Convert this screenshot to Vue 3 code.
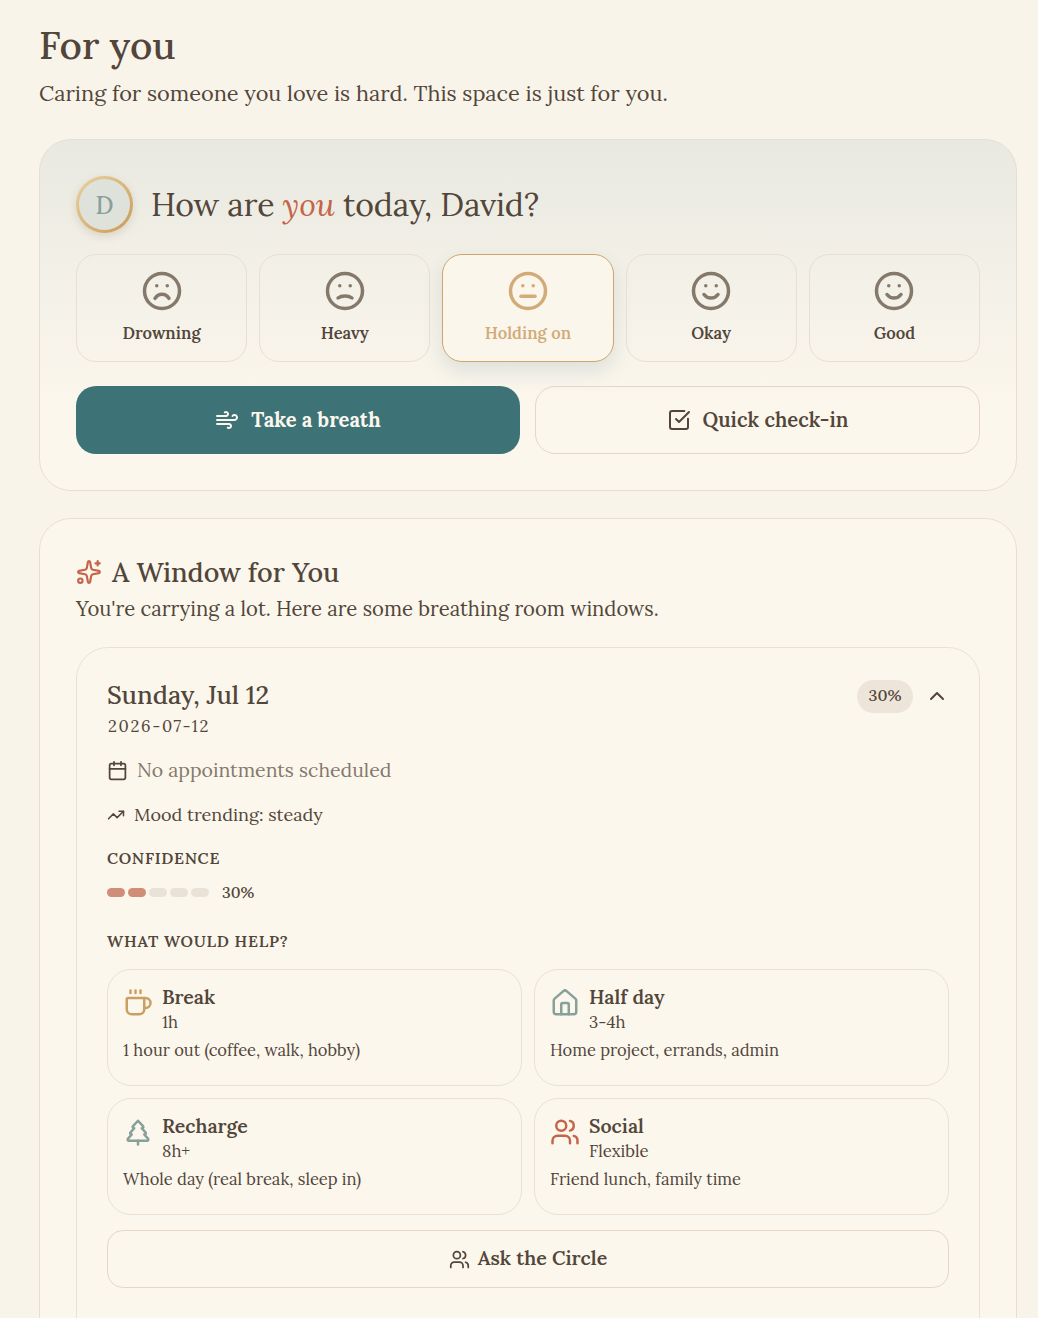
<script setup>
const moods = [
  { label: 'Drowning', mouth: 'M16 16.2s-1.5-2.4-4-2.4-4 2.4-4 2.4' },
  { label: 'Heavy', mouth: 'M16 16s-1.5-1.2-4-1.2-4 1.2-4 1.2' },
  { label: 'Holding on', mouth: 'M8 15h8', active: true },
  { label: 'Okay', mouth: 'M8 14s1.5 2 4 2 4-2 4-2' },
  { label: 'Good', mouth: 'M8 14s1.5 2 4 2 4-2 4-2' }
]
const segments = [true, true, false, false, false]
const options = [
  { title: 'Break', time: '1h', text: '1 hour out (coffee, walk, hobby)', color: '#c9a062', paths: ['M10 2v2', 'M14 2v2', 'M16 8a1 1 0 0 1 1 1v8a4 4 0 0 1-4 4H7a4 4 0 0 1-4-4V9a1 1 0 0 1 1-1h14a4 4 0 1 1 0 8h-1', 'M6 2v2'] },
  { title: 'Half day', time: '3-4h', text: 'Home project, errands, admin', color: '#87a09a', paths: ['M15 21v-8a1 1 0 0 0-1-1h-4a1 1 0 0 0-1 1v8', 'M3 10a2 2 0 0 1 .709-1.528l7-5.999a2 2 0 0 1 2.582 0l7 5.999A2 2 0 0 1 21 10v9a2 2 0 0 1-2 2H5a2 2 0 0 1-2-2z'] },
  { title: 'Recharge', time: '8h+', text: 'Whole day (real break, sleep in)', color: '#87a09a', paths: ['m17 14 3 3.3a1 1 0 0 1-.7 1.7H4.7a1 1 0 0 1-.7-1.7L7 14h-.3a1 1 0 0 1-.7-1.7L9 9h-.2A1 1 0 0 1 8 7.3L12 3l4 4.3a1 1 0 0 1-.8 1.7H15l3 3.3a1 1 0 0 1-.7 1.7H17Z', 'M12 22v-3'] },
  { title: 'Social', time: 'Flexible', text: 'Friend lunch, family time', color: '#c4654a', paths: ['M16 3.128a4 4 0 0 1 0 7.744', 'M16 21v-2a4 4 0 0 0-4-4H6a4 4 0 0 0-4 4v2', 'M22 21v-2a4 4 0 0 0-3-3.87', 'M13 7a4 4 0 1 1-8 0 4 4 0 0 1 8 0'] }
]
</script>

<template>
  <main class="page">
    <h1 class="title">For you</h1>
    <p class="subtitle">Caring for someone you love is hard. This space is just for you.</p>

    <section class="card hero">
      <div class="greeting">
        <div class="avatar">D</div>
        <h2>How are <em>you</em> today, David?</h2>
      </div>
      <div class="moods">
        <button v-for="m in moods" :key="m.label" class="mood" :class="{ active: m.active }">
          <svg class="mood-icon" viewBox="0 0 24 24" fill="none" stroke="currentColor" stroke-width="2" stroke-linecap="round" stroke-linejoin="round">
            <circle cx="12" cy="12" r="10" />
            <path :d="m.mouth" />
            <path d="M9 9h.01" />
            <path d="M15 9h.01" />
          </svg>
          <span>{{ m.label }}</span>
        </button>
      </div>
      <div class="actions">
        <button class="primary">
          <svg class="icon-22" viewBox="0 0 24 24" fill="none" stroke="currentColor" stroke-width="2" stroke-linecap="round" stroke-linejoin="round">
            <path d="M12.8 19.6A2 2 0 1 0 14 16H2" /><path d="M17.5 8a2.5 2.5 0 1 1 2 4H2" /><path d="M9.8 4.4A2 2 0 1 1 11 8H2" />
          </svg>
          <span>Take a breath</span>
        </button>
        <button class="secondary">
          <svg class="icon-22" viewBox="0 0 24 24" fill="none" stroke="currentColor" stroke-width="2" stroke-linecap="round" stroke-linejoin="round">
            <path d="M21 10.656V19a2 2 0 0 1-2 2H5a2 2 0 0 1-2-2V5a2 2 0 0 1 2-2h12.344" /><path d="m9 11 3 3L22 4" />
          </svg>
          <span>Quick check-in</span>
        </button>
      </div>
    </section>

    <section class="card window">
      <div class="window-head">
        <svg class="icon-24 rust" viewBox="0 0 24 24" fill="none" stroke="currentColor" stroke-width="2" stroke-linecap="round" stroke-linejoin="round">
          <path d="M11.017 2.814a1 1 0 0 1 1.966 0l1.051 5.558a2 2 0 0 0 1.594 1.594l5.558 1.051a1 1 0 0 1 0 1.966l-5.558 1.051a2 2 0 0 0-1.594 1.594l-1.051 5.558a1 1 0 0 1-1.966 0l-1.051-5.558a2 2 0 0 0-1.594-1.594l-5.558-1.051a1 1 0 0 1 0-1.966l5.558-1.051a2 2 0 0 0 1.594-1.594z" />
          <path d="M20 2v4" /><path d="M22 4h-4" /><circle cx="4" cy="20" r="2" />
        </svg>
        <h2>A Window for You</h2>
      </div>
      <p class="window-sub">You're carrying a lot. Here are some breathing room windows.</p>

      <div class="day">
        <div class="day-head">
          <div>
            <h3>Sunday, Jul 12</h3>
            <div class="iso">2026-07-12</div>
          </div>
          <div class="day-tools">
            <span class="pill">30%</span>
            <svg class="chev" viewBox="0 0 24 24" fill="none" stroke="currentColor" stroke-width="2" stroke-linecap="round" stroke-linejoin="round"><path d="m18 15-6-6-6 6" /></svg>
          </div>
        </div>

        <div class="appt">
          <svg class="icon-21 dark" viewBox="0 0 24 24" fill="none" stroke="currentColor" stroke-width="2" stroke-linecap="round" stroke-linejoin="round">
            <path d="M8 2v4" /><path d="M16 2v4" /><rect x="3" y="4" width="18" height="18" rx="2" /><path d="M3 10h18" />
          </svg>
          No appointments scheduled
        </div>
        <div class="trend">
          <svg class="icon-18" viewBox="0 0 24 24" fill="none" stroke="currentColor" stroke-width="2" stroke-linecap="round" stroke-linejoin="round">
            <path d="M16 7h6v6" /><path d="m22 7-8.5 8.5-5-5L2 17" />
          </svg>
          Mood trending: steady
        </div>

        <div class="label">CONFIDENCE</div>
        <div class="confidence">
          <div class="segments">
            <span v-for="(on, i) in segments" :key="i" class="seg" :class="{ on }"></span>
          </div>
          <span class="pct">30%</span>
        </div>

        <div class="label help">WHAT WOULD HELP?</div>
        <div class="options">
          <div v-for="o in options" :key="o.title" class="option">
            <div class="option-head">
              <svg class="icon-30" viewBox="0 0 24 24" fill="none" :stroke="o.color" stroke-width="2" stroke-linecap="round" stroke-linejoin="round">
                <path v-for="p in o.paths" :key="p" :d="p" />
              </svg>
              <div>
                <div class="option-title">{{ o.title }}</div>
                <div class="option-time">{{ o.time }}</div>
              </div>
            </div>
            <div class="option-text">{{ o.text }}</div>
          </div>
        </div>
        <button class="ask">
          <svg class="icon-21" viewBox="0 0 24 24" fill="none" stroke="currentColor" stroke-width="2" stroke-linecap="round" stroke-linejoin="round">
            <path d="M16 3.128a4 4 0 0 1 0 7.744" /><path d="M16 21v-2a4 4 0 0 0-4-4H6a4 4 0 0 0-4 4v2" /><path d="M22 21v-2a4 4 0 0 0-3-3.87" /><circle cx="9" cy="7" r="4" />
          </svg>
          <span class="ask-text">Ask the Circle</span>
        </button>
      </div>
    </section>
  </main>
</template>

<style>
html, body { margin: 0; background: #f9f4ea; }
</style>

<style scoped>
.page {
  box-sizing: border-box;
  width: 1038px;
  height: 1318px;
  overflow: hidden;
  padding: 21px 21px 0 39px;
  background: #f9f4ea;
  color: #52463a;
  font-family: Lora, "Liberation Serif", serif;
}
h1, h2, h3, p { margin: 0; font-weight: 400; }
button { font-family: inherit; cursor: pointer; }
.title { font-size: 38.7px; line-height: 48px; font-weight: 500; }
.subtitle { margin-top: 9px; font-size: 21.76px; line-height: 30px; }
.card {
  box-sizing: border-box;
  border: 1px solid #e8dfd2;
  border-radius: 32px;
  background: #fcf7ed;
  padding: 36px;
}
.hero {
  margin-top: 31px;
  height: 352px;
  background: linear-gradient(180deg, #e9e9e1 0%, #fcf7ed 78%);
}
.greeting { display: flex; align-items: center; gap: 18px; }
.avatar {
  box-sizing: border-box;
  width: 57px;
  height: 57px;
  padding-top: 1px;
  border-radius: 50%;
  border: 3px solid transparent;
  background: linear-gradient(#dfe2da, #dfe2da) padding-box, linear-gradient(135deg, #e9d2a2, #c99a55) border-box;
  color: #87a09a;
  font-size: 24px;
  font-weight: 500;
  display: flex;
  align-items: center;
  justify-content: center;
  box-shadow: 0 3px 8px rgba(120, 90, 50, 0.18);
}
.greeting h2 { font-size: 32px; line-height: 40px; letter-spacing: -0.1px; }
.greeting em { color: #c4654a; font-style: italic; }
.moods { margin-top: 21px; display: grid; grid-template-columns: repeat(5, 1fr); gap: 12px; }
.mood {
  box-sizing: border-box;
  height: 108px;
  padding: 15px 0 0;
  border: 1px solid #e8dfd2;
  border-radius: 20px;
  background: transparent;
  color: #52463a;
  font-size: 16.6px;
  font-weight: 600;
  display: flex;
  flex-direction: column;
  align-items: center;
  gap: 10px;
}
.mood-icon { width: 42px; height: 42px; color: #85796c; }
.mood.active {
  border-color: #cfa46e;
  color: #d2ab78;
  background: #fbf6ec;
  box-shadow: 0 10px 20px rgba(61, 115, 120, 0.14);
}
.mood.active .mood-icon { color: #d2ab78; }
.actions { margin-top: 24px; display: grid; grid-template-columns: 444px 1fr; gap: 15px; }
.primary, .secondary {
  box-sizing: border-box;
  height: 68px;
  border-radius: 20px;
  display: flex;
  align-items: center;
  justify-content: center;
  gap: 12px;
}
.primary { border: 0; background: #3d7277; color: #fcf7ed; font-size: 20.1px; font-weight: 700; }
.secondary { border: 1px solid #e4d7c6; background: transparent; color: #52463a; font-size: 20.2px; font-weight: 600; }
.icon-22 { width: 24px; height: 24px; }
.icon-24 { width: 26px; height: 26px; flex: none; }
.icon-21 { width: 21px; height: 21px; flex: none; }
.icon-18 { width: 18px; height: 18px; flex: none; }
.icon-30 { width: 30px; height: 30px; flex: none; margin-top: 4px; }
.rust { color: #c4654a; }
.dark { color: #52463a; }
.window { margin-top: 27px; height: 900px; }
.window-head { display: flex; align-items: center; gap: 10px; }
.window-head h2 { font-size: 27px; line-height: 34px; font-weight: 500; }
.window-sub { margin-top: 6px; font-size: 20.25px; line-height: 28px; }
.day {
  box-sizing: border-box;
  margin-top: 24px;
  height: 760px;
  border: 1px solid #e8e2d6;
  border-radius: 32px;
  padding: 30px;
}
.day-head { display: flex; justify-content: space-between; }
.day-head h3 { font-size: 25.5px; line-height: 34px; font-weight: 500; }
.iso { margin-top: 2px; padding-left: 1px; font-size: 16.5px; line-height: 24px; letter-spacing: 1.7px; }
.day-tools { display: flex; align-items: center; gap: 12px; height: 36px; }
.pill { background: #ede5d9; border-radius: 17px; padding: 0 11.5px 2px; font-size: 16px; line-height: 31px; font-weight: 500; }
.chev { width: 24px; height: 24px; }
.appt { margin-top: 18px; display: flex; align-items: center; gap: 9px; color: #85796c; font-size: 19.5px; line-height: 28px; }
.trend { margin-top: 18px; display: flex; align-items: center; gap: 9px; font-size: 18px; line-height: 26px; }
.label { margin-top: 19px; font-size: 16px; line-height: 22px; font-weight: 600; letter-spacing: 0.75px; }
.confidence { margin-top: 12px; display: flex; align-items: center; gap: 13px; }
.segments { display: flex; gap: 3px; }
.seg { width: 18px; height: 9px; border-radius: 5px; background: #e9e2d7; }
.seg.on { background: #d08d77; }
.pct { font-size: 15.7px; line-height: 22px; font-weight: 500; }
.help { margin-top: 27px; }
.options { margin-top: 17px; display: grid; grid-template-columns: 1fr 1fr; gap: 12px; }
.option {
  box-sizing: border-box;
  height: 117px;
  border: 1px solid #e8e2d6;
  border-radius: 24px;
  padding: 14px 15px;
}
.option-head { display: flex; gap: 9px; }
.option-title { font-size: 19.5px; line-height: 26px; font-weight: 600; }
.option-time { margin-top: 1px; font-size: 16.7px; line-height: 22px; }
.option-text { margin-top: 5px; font-size: 16.5px; line-height: 24px; }
.ask {
  box-sizing: border-box;
  margin-top: 15px;
  width: 100%;
  height: 58px;
  padding-bottom: 4px;
  border: 1px solid #e4d7c6;
  border-radius: 16px;
  background: transparent;
  color: #52463a;
  font-size: 19.6px;
  font-weight: 600;
  display: flex;
  align-items: center;
  justify-content: center;
  gap: 8px;
}
.ask .icon-21 { position: relative; top: 2px; }
</style>
